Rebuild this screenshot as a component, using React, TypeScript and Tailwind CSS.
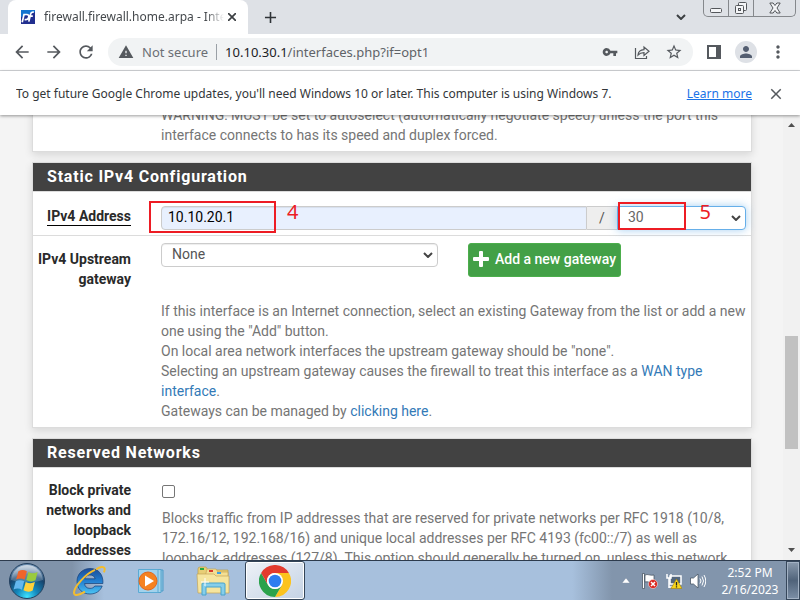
import type { ReactNode } from "react";
import {
  MdAdd,
  MdArrowBack,
  MdArrowForward,
  MdClose,
  MdMoreVert,
  MdPerson,
  MdRefresh,
  MdStarOutline,
  MdVpnKey,
  MdWarning,
} from "react-icons/md";

function ToolButton({ label, children }: { label: string; children: ReactNode }) {
  return (
    <button type="button" aria-label={label} className="flex h-7 w-8 shrink-0 items-center justify-center">
      {children}
    </button>
  );
}

function Chevron({ className }: { className: string }) {
  return (
    <svg viewBox="0 0 10 6" fill="none" stroke="currentColor" strokeWidth="2" className={className}>
      <path d="M1 1l4 4 4-4" />
    </svg>
  );
}

function TabStrip() {
  return (
    <div className="flex h-[34px] shrink-0 items-start bg-[#dee1e6] pl-2">
      <div className="flex h-full w-60 items-center rounded-t-lg bg-white pr-2 pl-[13px]">
        <svg viewBox="0 0 14 14" className="h-3.5 w-3.5 shrink-0">
          <rect width="14" height="14" fill="#1475cf" />
          <path d="M0 7l14-5v12H0z" fill="#212f8f" />
          <path
            d="M1.2 12.2L3 4.5h2.6c2 0 2.5 1 2.1 2.6-.4 1.7-1.4 2.6-3.2 2.6H3.6M7.8 11.6L9.6 4c.3-1.5 1.3-2.1 3.2-1.8M8.4 6.2h3.4"
            fill="none"
            stroke="#fff"
            strokeWidth="1.7"
          />
        </svg>
        <span className="ml-[9px] min-w-0 flex-1 overflow-hidden mask-r-from-90% text-xs whitespace-nowrap text-[#45494d]">
          firewall.firewall.home.arpa - Interf
        </span>
        <button type="button" aria-label="Close tab" className="flex h-4 w-4 items-center justify-center text-[#3c4043]">
          <svg viewBox="0 0 8 8" stroke="currentColor" strokeWidth="1.7" className="h-2 w-2">
            <path d="M0 0l8 8M8 0L0 8" />
          </svg>
        </button>
      </div>
      <button type="button" aria-label="New tab" className="ml-3 flex h-[34px] w-5 items-center justify-center text-[#2f3337]">
        <MdAdd className="h-[19px] w-[19px]" />
      </button>
      <button type="button" aria-label="Search tabs" className="mr-3.5 ml-auto flex h-[34px] w-4 items-center justify-center text-[#3c4043]">
        <Chevron className="h-1.5 w-2.5" />
      </button>
      <div className="mr-1 flex h-[17px] w-[93px] divide-x divide-[#85888c] rounded-b-[5px] border-x border-b border-[#85888c] text-[#54575b]">
        <button type="button" aria-label="Minimize" className="flex w-[25px] items-center justify-center pt-1">
          <svg viewBox="0 0 12 5" className="h-[5px] w-3">
            <rect x=".5" y=".5" width="11" height="4" rx="1" fill="#f4f5f7" stroke="currentColor" />
          </svg>
        </button>
        <button type="button" aria-label="Restore" className="flex w-[25px] items-center justify-center">
          <svg viewBox="0 0 14 14" fill="#f4f5f7" stroke="currentColor" className="h-3.5 w-3.5">
            <rect x="4.500" y="1.500" width="8" height="8" rx="1" />
            <rect x="1.500" y="4.500" width="8" height="8" rx="1" />
            <rect x="4.500" y="7.500" width="2" height="2" />
          </svg>
        </button>
        <button type="button" aria-label="Close window" className="flex flex-1 items-center justify-center">
          <svg viewBox="0 0 12 12" className="h-3 w-3">
            <path
              d="M.8 1h3.300L6 3.500 7.900 1h3.300L8 6l3.200 5H7.900L6 8.500 4.100 11H.8L4 6z"
              fill="#f4f5f7"
              stroke="currentColor"
            />
          </svg>
        </button>
      </div>
    </div>
  );
}

function Toolbar() {
  return (
    <div className="flex h-[37px] shrink-0 items-center border-b border-[#d5d7da] bg-white pl-1.5 text-[#55595e]">
      <ToolButton label="Back">
        <MdArrowBack className="h-5 w-5" />
      </ToolButton>
      <ToolButton label="Forward">
        <MdArrowForward className="h-5 w-5" />
      </ToolButton>
      <ToolButton label="Reload">
        <MdRefresh className="h-5 w-5" />
      </ToolButton>
      <div className="ml-1.5 flex h-7 min-w-0 flex-1 items-center rounded-full bg-[#f1f3f4] pr-[3px] pl-2.5 text-sm">
        <MdWarning className="h-4 w-4 shrink-0" />
        <span className="ml-2 shrink-0 text-[13px] text-[#6b6f74]">Not secure</span>
        <span className="mx-2 h-4 w-px shrink-0 bg-[#9aa0a6]" />
        <span className="min-w-0 flex-1 truncate text-[13px] text-[#5f6368]">
          <span className="text-[#202124]">10.10.30.1</span>/interfaces.php?if=opt1
        </span>
        <ToolButton label="Passwords">
          <MdVpnKey className="h-4 w-4" />
        </ToolButton>
        <ToolButton label="Share">
          <svg viewBox="0 0 16 16" fill="none" stroke="currentColor" strokeWidth="1.2" className="h-4 w-4">
            <path d="M1.500 4v10.500h11V12" />
            <path d="M4 11c.3-3.600 2.400-5.200 6-5.400V3l5 4.200-5 4.200V8.600C7.500 8.600 5.500 9.300 4 11z" />
          </svg>
        </ToolButton>
        <ToolButton label="Bookmark this tab">
          <MdStarOutline className="h-[18px] w-[18px]" />
        </ToolButton>
      </div>
      <div className="mr-1.5 ml-[5px] flex">
        <ToolButton label="Side panel">
          <svg viewBox="0 0 14 14" className="h-3.5 w-3.5">
            <path d="M1 1h12v12H1z" fill="none" stroke="currentColor" strokeWidth="2" />
            <path d="M9 0h5v14H9z" fill="currentColor" />
          </svg>
        </ToolButton>
        <ToolButton label="Profile">
          <span className="flex h-[22px] w-[22px] items-center justify-center rounded-full bg-[#dee1e6] text-[#535d70]">
            <MdPerson className="h-[18px] w-[18px]" />
          </span>
        </ToolButton>
        <ToolButton label="Menu">
          <MdMoreVert className="h-5 w-5" />
        </ToolButton>
      </div>
    </div>
  );
}

function InfoBar() {
  return (
    <div className="z-10 flex h-11 shrink-0 items-center bg-white pt-px pr-4 pl-4 text-xs text-[#333639] shadow-[0_1px_3px_rgba(0,0,0,0.4)]">
      <p className="min-w-0 flex-1 truncate">
        To get future Google Chrome updates, you'll need Windows 10 or later. This computer is using Windows 7.
      </p>
      <a href="#learn" className="text-[#1a73e8] underline">
        Learn more
      </a>
      <button type="button" aria-label="Dismiss" className="ml-4 flex h-4 w-4 items-center justify-center text-[#55595e]">
        <MdClose className="h-[18px] w-[18px] shrink-0" />
      </button>
    </div>
  );
}

function Panel({ title, children }: { title: string; children: ReactNode }) {
  return (
    <section className="mb-2.5 border border-[#dcdcdc] bg-white shadow-[0_3px_8px_rgba(0,0,0,0.12)]">
      <h2 className="border-b border-[#dcdcdc] bg-[#424242] px-3.5 text-base leading-7 font-bold tracking-wider text-white">
        {title}
      </h2>
      {children}
    </section>
  );
}

const row = "grid grid-cols-[98px_minmax(0,1fr)] gap-x-[30px] pr-[5px]";
const rowLabel = "text-right font-bold text-[#2a2a2a]";

function Content() {
  return (
    <main className="min-w-0 flex-1 overflow-hidden bg-[#f4f4f4] pr-[31px] pl-8 font-['Roboto','Liberation_Sans',sans-serif] text-sm leading-5 text-[#757575]">
      <section className="-mt-[11px] mb-2.5 border border-[#dcdcdc] bg-white pb-1.5 shadow-[0_3px_8px_rgba(0,0,0,0.12)]">
        <div className={row}>
          <p className="col-start-2">
            WARNING: MUST be set to autoselect (automatically negotiate speed) unless the port this interface connects to has
            its speed and duplex forced.
          </p>
        </div>
      </section>

      <Panel title="Static IPv4 Configuration">
        <div className={`${row} border-b border-[#dcdcdc] pt-3.5 pb-[5px]`}>
          <label htmlFor="ipaddr" className={rowLabel}>
            <span className="inline-block border-b border-black leading-[18px]">IPv4 Address</span>
          </label>
          <div className="relative flex h-6">
            <input
              id="ipaddr"
              type="text"
              defaultValue="10.10.20.1"
              className="min-w-0 flex-1 rounded-l border border-[#ccc] bg-[#e8f0fe] px-1.5 pb-0.5 text-black shadow-[inset_0_1px_1px_rgba(0,0,0,0.075)]"
            />
            <span className="flex w-[30px] items-center justify-center border-y border-[#ccc] bg-[#eee] text-[#555]">/</span>
            <div className="relative w-[129px]">
              <select
                aria-label="Subnet mask bits"
                defaultValue="30"
                className="block h-6 w-full appearance-none rounded-r border border-[#66afe9] bg-white px-2.5 pb-0.5 text-[#666] shadow-[0_0_8px_rgba(102,175,233,0.6)]"
              >
                <option>30</option>
              </select>
              <Chevron className="pointer-events-none absolute top-[9px] right-[5px] h-1.5 w-2.5 text-[#444]" />
            </div>
            <div className="pointer-events-none absolute -top-[5px] -left-3 h-8 w-[127px] border-2 border-[#ed1c24]" />
            <span className="pointer-events-none absolute -top-2 left-[126px] font-['Noto_Sans',sans-serif] text-xl leading-7 text-[#ed1c24]">
              4
            </span>
            <div className="pointer-events-none absolute -top-1 right-[60px] h-7 w-[68px] border-2 border-[#ed1c24]" />
            <span className="pointer-events-none absolute -top-2 right-[35px] font-['Noto_Sans',sans-serif] text-xl leading-7 text-[#ed1c24]">
              5
            </span>
          </div>
        </div>

        <div className={`${row} pt-[7px] pb-1.5`}>
          <label htmlFor="gateway" className={`${rowLabel} pt-1.5`}>
            IPv4 Upstream gateway
          </label>
          <div>
            <div className="flex items-start gap-[30px]">
              <div className="relative w-[277px]">
                <select
                  id="gateway"
                  defaultValue="None"
                  className="block h-6 w-full appearance-none rounded border border-[#ccc] bg-white px-2.5 pb-0.5 text-[#555] shadow-[inset_0_1px_1px_rgba(0,0,0,0.075)]"
                >
                  <option>None</option>
                </select>
                <Chevron className="pointer-events-none absolute top-[9px] right-[5px] h-1.5 w-2.5 text-[#444]" />
              </div>
              <button
                type="button"
                className="flex h-[34px] items-center gap-1.5 rounded-[3px] border border-[#4cae4c] bg-[#43a047] px-1 pb-0.5 font-medium whitespace-nowrap text-white"
              >
                <svg viewBox="0 0 16 16" fill="currentColor" className="h-4 w-4">
                  <rect x="6" width="4" height="16" rx="1" />
                  <rect y="6" width="16" height="4" rx="1" />
                </svg>
                Add a new gateway
              </button>
            </div>
            <p className="-mr-1 mt-6">
              If this interface is an Internet connection, select an existing Gateway from the list or add a new one using the
              "Add" button.
              <br />
              On local area network interfaces the upstream gateway should be "none".
              <br />
              Selecting an upstream gateway causes the firewall to treat this interface as a{" "}
              <a href="#wan" className="text-[#337ab7]">
                WAN type interface
              </a>
              .
              <br />
              Gateways can be managed by{" "}
              <a href="#gateways" className="text-[#337ab7]">
                clicking here
              </a>
              .
            </p>
          </div>
        </div>
      </Panel>

      <Panel title="Reserved Networks">
        <div className={`${row} pt-3 pb-4`}>
          <label htmlFor="blockpriv" className={rowLabel}>
            Block private networks and loopback addresses
          </label>
          <div className="pt-[5px] pl-px">
            <input
              id="blockpriv"
              type="checkbox"
              className="block h-[13px] w-[13px] appearance-none rounded-[2px] border border-[#767676] bg-white checked:bg-[#1a73e8]"
            />
            <p className="mt-2.5">
              Blocks traffic from IP addresses that are reserved for private networks per RFC 1918 (10/8, 172.16/12, 192.168/16)
              and unique local addresses per RFC 4193 (fc00::/7) as well as loopback addresses (127/8). This option should
              generally be turned on, unless this network interface resides in such a private address space, too.
            </p>
          </div>
        </div>
      </Panel>
    </main>
  );
}

function ScrollBar() {
  return (
    <div className="flex w-[17px] shrink-0 flex-col items-center bg-[#f1f1f1]">
      <svg viewBox="0 0 7 4" className="mt-2 h-1 w-[7px]">
        <path d="M0 4h7L3.500 0z" fill="#505050" />
      </svg>
      <div className="grow-[209]" />
      <div className="h-[113px] w-[13px] bg-[#c1c1c1]" />
      <div className="grow-[99]" />
      <svg viewBox="0 0 7 4" className="mb-2 h-1 w-[7px]">
        <path d="M0 0h7L3.500 4z" fill="#505050" />
      </svg>
    </div>
  );
}

function StartOrb() {
  return (
    <svg viewBox="0 0 36 36" className="h-9 w-9">
      <defs>
        <radialGradient id="orb" cx=".5" cy=".95" r=".85">
          <stop offset="0" stopColor="#3fe4ff" />
          <stop offset=".35" stopColor="#1489bd" />
          <stop offset=".75" stopColor="#17436c" />
          <stop offset="1" stopColor="#6a8caf" />
        </radialGradient>
        <linearGradient id="gloss" x2="0" y2="1">
          <stop offset="0" stopColor="#fff" stopOpacity=".65" />
          <stop offset="1" stopColor="#fff" stopOpacity=".15" />
        </linearGradient>
      </defs>
      <circle cx="18" cy="18" r="17.500" fill="url(#orb)" stroke="#24415f" />
      <path d="M2 17C3 8 10 2 18 2s15 6 16 15c-9 3-23 3-32 0z" fill="url(#gloss)" />
      <g transform="translate(-3 -3) scale(1.18)">
        <path d="M10.500 9.500c2.500-1.500 5-1.300 7.200 0l-1.900 7.200c-2.400-1.400-4.800-1.400-7.200-.1z" fill="#f0652a" />
        <path d="M19 10.200c2.500 1.400 5 1.300 7.800-.1L25 17.200c-2.600 1.400-5.200 1.200-7.800-.2z" fill="#9acb3c" />
        <path d="M8.300 18c2.300-1.300 4.700-1.200 7.100.1l-1.900 7.100c-2.300-1.300-4.700-1.400-7.100-.1z" fill="#64b7ee" />
        <path d="M16.700 18.600c2.600 1.400 5.200 1.400 7.800.1l-1.900 7.100c-2.600 1.400-5.200 1.300-7.800-.1z" fill="#ffd13b" />
      </g>
    </svg>
  );
}

function ExplorerLogo() {
  return (
    <svg viewBox="0 0 34 32" className="h-8 w-[34px]">
      <defs>
        <linearGradient id="ie" x2="0" y2="1">
          <stop offset="0" stopColor="#1d4c97" />
          <stop offset=".5" stopColor="#237fd0" />
          <stop offset="1" stopColor="#4cc5f4" />
        </linearGradient>
      </defs>
      <path
        d="M18 3.500C10.500 3.500 5 9 5 16.500S10.500 29 18 29c5.800 0 10.400-3 12.200-8h-7.400c-1 1.600-2.600 2.400-4.800 2.400-3.300 0-5.200-1.900-5.400-4.900h18.300C31.500 9.500 26.500 3.500 18 3.500zm-5.300 10.300C13.300 11.300 15 10 17.900 10c2.800 0 4.600 1.300 5.200 3.800z"
        fill="url(#ie)"
        stroke="#153d75"
        strokeWidth=".7"
      />
      <path
        d="M24 4.500c4-2.700 7.600-3.400 8.500-1.300.4 1 .1 2.500-.6 4.100M23 4.900C14 8.500 1.500 22 2 28.200c.5 3.300 6 1.600 11-1.500"
        fill="none"
        stroke="#f4bd2e"
        strokeWidth="2"
      />
    </svg>
  );
}

function MediaPlayerLogo() {
  return (
    <svg viewBox="0 0 30 28" className="h-7 w-[30px]">
      <path d="M8 3h18v21H8z" fill="#8dc2df" stroke="#4d9cc9" />
      <path d="M5 2.500h19v23H5z" fill="#a5d4eb" stroke="#57a4cd" />
      <path d="M1.500 2.500h19.500v23H1.500z" fill="#a2d2ec" stroke="#5aaad4" />
      <circle cx="11" cy="14" r="9" fill="#f58220" stroke="#e2661b" />
      <path d="M8 8.500v11l9-5.500z" fill="#fff" />
    </svg>
  );
}

function FolderLogo() {
  return (
    <svg viewBox="0 0 34 30" className="h-[30px] w-[34px]">
      <path d="M2 6V3q0-2 2-2h6l2 3h20v5H2z" fill="#e8ce76" stroke="#bd9d48" strokeWidth=".7" />
      <path d="M4 2h4v2H4z" fill="#25a83f" />
      <path d="M11 3h9l2 3h10v5H9z" fill="#f4df93" stroke="#c4a558" strokeWidth=".7" />
      <path d="M13 4h4v2h-4z" fill="#da3b2b" />
      <path d="M21 6h4v2h-4z" fill="#3aa0e4" />
      <path d="M1 8h17l2 2h13v17H2z" fill="#f6e59e" stroke="#c4a558" strokeWidth=".7" />
      <path d="M6 18q0-1 1-1h20q2 0 2 1v11h-4v-8H10v8H6z" fill="#86cee9" stroke="#48a3cd" />
      <path d="M9 12v8M5 16h8" stroke="#fff" />
    </svg>
  );
}

function ChromeLogo() {
  return (
    <svg viewBox="0 0 48 48" className="h-8 w-8">
      <path d="M24 12h20.800A24 24 0 0 1 24 48l10.400-18z" fill="#fcc31e" />
      <path d="M3.200 12l10.400 18A12 12 0 0 0 34.400 30L24 48A24 24 0 0 1 3.200 12z" fill="#2ba24c" />
      <path d="M3.200 12A24 24 0 0 1 44.800 12H24a12 12 0 0 0-10.400 18z" fill="#e33b2e" />
      <circle cx="24" cy="24" r="12" fill="#fff" />
      <circle cx="24" cy="24" r="9.500" fill="#2d7df0" />
    </svg>
  );
}

function TrayIcons() {
  return (
    <>
      <button type="button" aria-label="Show hidden icons" className="mr-3">
        <svg viewBox="0 0 8 5" className="h-[5px] w-2">
          <path d="M0 5L4 0l4 5z" fill="#fff" stroke="#546880" strokeWidth=".3" />
        </svg>
      </button>
      <button type="button" aria-label="Action Center" className="mr-2">
        <svg viewBox="0 0 16 16" className="h-4 w-4">
          <path d="M.5.5h2v15h-2z" fill="#fff" stroke="#3d4a59" strokeWidth=".7" />
          <path d="M3 2c3-1.500 4.500 1 9 0v7C8 10.500 6 8 3 9z" fill="#fff" stroke="#3d4a59" strokeWidth=".7" />
          <circle cx="11" cy="11" r="4.500" fill="#d9251d" stroke="#fff" strokeWidth=".5" />
          <path d="M9 9l4 4M13 9l-4 4" stroke="#fff" strokeWidth="1.500" />
        </svg>
      </button>
      <button type="button" aria-label="Network" className="mr-2">
        <svg viewBox="0 0 16 16" className="h-4 w-4">
          <path d="M4 3h11v8H4z" fill="#53677e" stroke="#fff" strokeWidth="1.500" />
          <path d="M1 1v4h4V1M3 5v10M3 14h6" fill="none" stroke="#fff" strokeWidth="1.500" />
          <path d="M10.500 6L16 15.500H5z" fill="#f9d71c" stroke="#a47d08" strokeWidth=".6" />
          <path d="M10.500 9v3.500M10.500 13.300v1.200" stroke="#222" strokeWidth="1.300" />
        </svg>
      </button>
      <button type="button" aria-label="Volume">
        <svg viewBox="0 0 16 16" fill="none" className="h-4 w-4">
          <path d="M.5 5h3L8 1v14l-4.500-4h-3z" fill="#fff" stroke="#3d4a59" strokeWidth=".7" />
          <path d="M10 5.500q2 2.500 0 5M12 3.500q3 4.500 0 9M14 2q3.500 6 0 12" stroke="#fff" />
        </svg>
      </button>
    </>
  );
}

function TaskBar() {
  return (
    <footer className="flex h-10 shrink-0 items-center border-t border-[#2d3b4d] bg-linear-to-r from-[#8093aa] from-9% via-[#a7c0dd] via-13% to-[#a7c0dd] to-72%">
      <button type="button" aria-label="Start" className="flex w-[54px] shrink-0 justify-center">
        <StartOrb />
      </button>
      <button type="button" aria-label="Internet Explorer" className="flex w-[70px] shrink-0 justify-center">
        <ExplorerLogo />
      </button>
      <button type="button" aria-label="Media Player" className="flex w-14 shrink-0 justify-center">
        <MediaPlayerLogo />
      </button>
      <button type="button" aria-label="File Explorer" className="flex w-[65px] shrink-0 justify-center">
        <FolderLogo />
      </button>
      <button
        type="button"
        aria-label="Google Chrome"
        className="flex h-[39px] w-[60px] shrink-0 items-center justify-center rounded-[3px] border border-[#344558] bg-linear-to-br from-[#eef2f7] to-[#c4d2e4] shadow-[inset_0_0_0_1px_#fff]"
      >
        <ChromeLogo />
      </button>
      <div className="flex h-full flex-1 items-center justify-end bg-linear-to-r from-transparent from-54% to-[#8295ac] to-62%">
        <TrayIcons />
        <div className="ml-3 w-16 text-center text-xs text-white">
          <p className="leading-[17px]">2:52 PM</p>
          <p className="leading-[17px]">2/16/2023</p>
        </div>
        <button
          type="button"
          aria-label="Show desktop"
          className="ml-1 h-full w-3.5 border border-[#36475b] bg-linear-to-b from-[#8b9bae] via-[#50637a] via-50% to-[#7d90a7] shadow-[inset_0_0_0_1px_#a3b2c4]"
        />
      </div>
    </footer>
  );
}

export default function App() {
  return (
    <div className="flex h-screen flex-col overflow-hidden font-['Noto_Sans','Open_Sans',sans-serif]">
      <TabStrip />
      <Toolbar />
      <InfoBar />
      <div className="flex min-h-0 flex-1">
        <Content />
        <ScrollBar />
      </div>
      <TaskBar />
    </div>
  );
}
